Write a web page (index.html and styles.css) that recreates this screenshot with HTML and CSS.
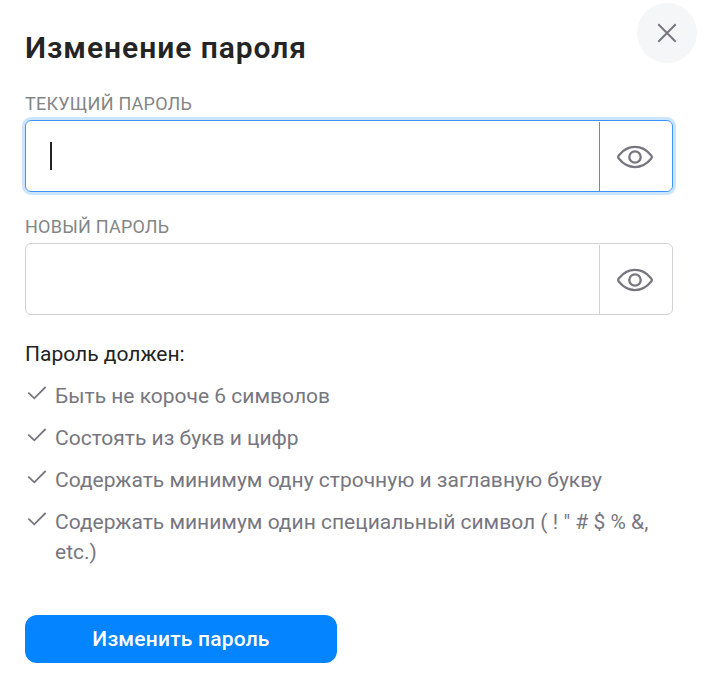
FILE: index.html
```html
<!DOCTYPE html>
<html lang="ru">
<head>
<meta charset="utf-8">
<title>Изменение пароля</title>
<link rel="stylesheet" href="styles.css">
</head>
<body>
<main class="dialog">
  <button class="close" type="button"><svg width="60" height="60" viewBox="0 0 60 60"><path d="M21.3 21.3 38.7 38.7M38.7 21.3 21.3 38.7"/></svg></button>
  <h1 class="title">Изменение пароля</h1>
  <div class="label">ТЕКУЩИЙ ПАРОЛЬ</div>
  <div class="field field-focused">
    <div class="entry"><span class="caret"></span></div>
    <div class="reveal"><svg width="38" height="26" viewBox="0 0 38 26"><path d="M2.100 13C2.100 12.200 2.600 11.600 3.200 10.900C7.300 5.900 12.800 2.900 19 2.900S30.700 5.900 34.800 10.900C35.400 11.600 35.900 12.200 35.900 13C35.900 13.800 35.400 14.400 34.800 15.100C30.700 20.100 25.200 23.100 19 23.100S7.300 20.100 3.200 15.100C2.600 14.400 2.100 13.800 2.100 13Z"/><circle cx="19" cy="13" r="5.700"/></svg></div>
  </div>
  <div class="label label-next">НОВЫЙ ПАРОЛЬ</div>
  <div class="field">
    <div class="entry"></div>
    <div class="reveal"><svg width="38" height="26" viewBox="0 0 38 26"><path d="M2.100 13C2.100 12.200 2.600 11.600 3.200 10.900C7.300 5.900 12.800 2.900 19 2.900S30.700 5.900 34.800 10.900C35.400 11.600 35.900 12.200 35.900 13C35.900 13.800 35.400 14.400 34.800 15.100C30.700 20.100 25.200 23.100 19 23.100S7.300 20.100 3.200 15.100C2.600 14.400 2.100 13.800 2.100 13Z"/><circle cx="19" cy="13" r="5.700"/></svg></div>
  </div>
  <p class="rules-title">Пароль должен:</p>
  <ul class="rules">
    <li class="rule"><svg class="check" width="30" height="30" viewBox="0 0 30 30"><path d="m3.300 11.600 6 5.700L20.600 6"/></svg><span>Быть не короче 6 символов</span></li>
    <li class="rule"><svg class="check" width="30" height="30" viewBox="0 0 30 30"><path d="m3.300 11.600 6 5.700L20.600 6"/></svg><span>Состоять из букв и цифр</span></li>
    <li class="rule"><svg class="check" width="30" height="30" viewBox="0 0 30 30"><path d="m3.300 11.600 6 5.700L20.600 6"/></svg><span>Содержать минимум одну строчную и заглавную букву</span></li>
    <li class="rule"><svg class="check" width="30" height="30" viewBox="0 0 30 30"><path d="m3.300 11.600 6 5.700L20.600 6"/></svg><span>Содержать минимум один специальный символ ( ! " # $ % &amp;,<br>etc.)</span></li>
  </ul>
  <button class="submit" type="button">Изменить пароль</button>
</main>
</body>
</html>
```
FILE: styles.css
```css
* { box-sizing: border-box; }
body { margin: 0; background: #fff; font-family: Roboto, "Liberation Sans", sans-serif; color: #222; overflow: hidden; }
.dialog { position: relative; width: 704px; height: 686px; padding: 28px 31px 0 25px; }
.close { position: absolute; top: 3px; right: 7px; width: 60px; height: 60px; padding: 0; border: 0; border-radius: 50%; background: #f5f6f8; }
svg { display: block; fill: none; stroke: #777680; stroke-width: 2; }
.title { margin: 0; height: 40px; font-size: 30px; line-height: 40px; font-weight: 600; letter-spacing: 0.95px; color: #242424; }
.label { margin-top: 24px; height: 28px; line-height: 24px; font-size: 18px; color: #858585; letter-spacing: 0.25px; }
.label-next { margin-top: 23px; }
.field { display: flex; height: 72px; border: 1px solid #d0d2d9; border-radius: 6px; padding-top: 1px; }
.field-focused { border-color: #3c94ff; box-shadow: 0 0 0 3px #cbe5ff; }
.entry { flex: 1; padding: 20px 24px; }
.caret { display: block; width: 2px; height: 28px; background: #222; }
.reveal { width: 73px; border-left: 1px solid #d0d2d9; display: flex; align-items: center; justify-content: center; padding-right: 2px; }
.field-focused .reveal { border-color: #3c94ff; }
.reveal svg { stroke-width: 2.300; }
.rules-title { margin: 24px 0 12px; font-size: 21px; line-height: 30px; }
.rules { list-style: none; margin: 0; padding: 0; display: grid; gap: 12px; }
.rule { display: flex; font-size: 21px; line-height: 30px; color: #777680; white-space: nowrap; }
.check { flex: none; stroke-width: 1.800; }
.submit { display: block; margin-top: 48px; width: 312px; height: 48px; padding: 0; border: 0; border-radius: 12px; background: #0484ff; color: #fff; font: 500 21px/48px Roboto, sans-serif; letter-spacing: 0.2px; }
```
